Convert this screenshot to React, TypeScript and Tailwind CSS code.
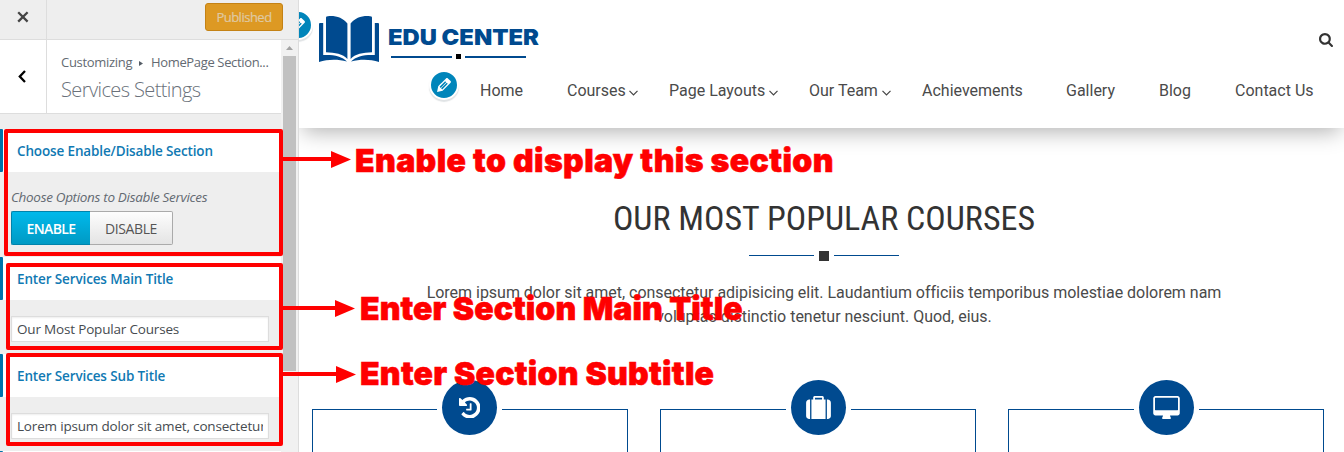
import type { ReactNode } from 'react';

const navItems = [
  { label: 'Home', width: 'w-[87px]', text: '', menu: false },
  { label: 'Courses', width: 'w-[102px]', text: 'w-[58px]', menu: true },
  { label: 'Page Layouts', width: 'w-[140px]', text: 'w-[96px]', menu: true },
  { label: 'Our Team', width: 'w-[113px]', text: 'w-[69px]', menu: true },
  { label: 'Achievements', width: 'w-[144px]', text: '', menu: false },
  { label: 'Gallery', width: 'w-[93px]', text: '', menu: false },
  { label: 'Blog', width: 'w-[76px]', text: '', menu: false },
  { label: 'Contact Us', width: 'w-[109px]', text: '', menu: false },
];

function EditBadge() {
  return (
    <span className="flex size-[30px] items-center justify-center rounded-full border-2 border-white bg-[#0085ba] shadow-[0_2px_1px_rgba(46,68,83,0.15)]">
      <svg viewBox="0 0 20 20" className="size-5 shrink-0 fill-white">
        <path d="M13.89 3.39l2.71 2.72c.46.46.42 1.24.03 1.64l-8.01 8.02-5.56 1.16 1.16-5.58s7.6-7.63 7.99-8.03c.39-.39 1.22-.39 1.68.07zm-2.73 2.79l-5.59 5.61 1.11 1.11 5.54-5.65zm-2.97 8.23l5.58-5.6-1.07-1.08-5.59 5.6z" />
      </svg>
    </span>
  );
}

function SectionHeading({ children, className }: { children?: ReactNode; className: string }) {
  return (
    <div className="flex h-[43px] shrink-0 items-center bg-white">
      <span className="h-full w-[3px] rounded-r-[1px] bg-[#0073aa]" />
      <h3 className={`pt-[2px] pl-[14px] text-[13.5px] font-semibold whitespace-nowrap text-[#1079b3] ${className}`}>{children}</h3>
    </div>
  );
}

function TextField({ value, className }: { value: string; className: string }) {
  return (
    <div className="ml-[11px] flex h-[26px] w-[258px] items-center border border-[#ddd] bg-white px-[5px] shadow-[inset_0_1px_2px_rgba(0,0,0,0.07)]">
      <span className={`w-full overflow-hidden pt-px text-[13.5px] whitespace-nowrap text-[#464b50] ${className}`}>{value}</span>
    </div>
  );
}

function Sidebar() {
  return (
    <aside className="flex h-[452px] w-[299px] shrink-0 flex-col border-r border-[#ddd] bg-[#eee] font-['Open_Sans',sans-serif]">
      <div className="flex h-10 shrink-0 border-b border-[#ddd]">
        <div className="flex w-[47px] items-center justify-center border-r border-[#ddd] pb-[5px]">
          <svg viewBox="0 0 12 12" className="size-3 fill-none stroke-[#444]" strokeWidth="2.3">
            <path d="M1.2 1.2l9.4 9.4M10.6 1.2L1.2 10.6" />
          </svg>
        </div>
        <div className="flex flex-1 justify-end pt-[3px] pr-[15px]">
          <span className="flex h-7 w-[78px] items-center justify-center rounded-[3px] border border-[#c48215] bg-[#dd9923] pt-px text-[13px] tracking-[-0.5px] text-[#dfc9a2] [-webkit-text-stroke:0.2px_#dfc9a2]">
            Published
          </span>
        </div>
      </div>
      <div className="flex min-h-0 flex-1">
        <div className="flex w-[281px] flex-col overflow-hidden">
          <div className="flex h-[74px] shrink-0 border-b border-[#ddd] bg-white">
            <div className="flex w-[47px] items-center justify-center border-r border-[#ddd] pr-[2px]">
              <svg viewBox="0 0 8 13" className="h-[13px] w-2 fill-none stroke-black" strokeWidth="2.3">
                <path d="M7 1L1.8 6.5L7 12" />
              </svg>
            </div>
            <div className="pt-[13px] pl-[14px]">
              <div className="flex h-5 items-center text-[13px] whitespace-nowrap text-[#636a72]">
                <span className="w-[78px] tracking-[-0.3px]">Customizing</span>
                <svg viewBox="0 0 4 5" className="mr-2 h-[5px] w-1 fill-[#555d66]">
                  <path d="M0 0l4 2.5L0 5z" />
                </svg>
                <span className="tracking-[-0.35px]">HomePage Section...</span>
              </div>
              <div className="mt-[3px] text-[20px] leading-[28px] font-light tracking-[-0.6px] text-[#6a717a]">Services Settings</div>
            </div>
          </div>
          <div className="flex flex-col pt-[15px]">
            <SectionHeading className="tracking-[-0.14px]">Choose Enable/Disable Section</SectionHeading>
            <div className="h-[85px] pt-4 pl-[11px]">
              <p className="h-[23px] text-[13.5px] leading-[18px] tracking-[-0.32px] whitespace-nowrap text-[#636a72] italic">
                Choose Options to Disable Services
              </p>
              <div className="flex h-[34px] w-[162px] text-[14px]">
                <span className="flex w-[79px] items-center justify-center rounded-l-[2px] border border-r-0 border-[#0083ab] bg-linear-to-b from-[#00b9eb] to-[#009ac4] font-semibold tracking-[-0.6px] text-white">
                  ENABLE
                </span>
                <span className="flex w-[83px] items-center justify-center rounded-r-[2px] border border-l-0 border-[#aaa] bg-linear-to-b from-[#fdfdfd] to-[#e4e4e4] tracking-[-0.4px] text-[#555]">
                  DISABLE
                </span>
              </div>
            </div>
            <SectionHeading className="tracking-[-0.13px]">Enter Services Main Title</SectionHeading>
            <div className="h-[54px] pt-4">
              <TextField value="Our Most Popular Courses" className="tracking-[-0.18px]" />
            </div>
            <SectionHeading className="tracking-[-0.13px]">Enter Services Sub Title</SectionHeading>
            <div className="h-[54px] pt-4">
              <TextField value="Lorem ipsum dolor sit amet, consectetur" className="tracking-[-0.18px]" />
            </div>
            <SectionHeading className="" />
          </div>
        </div>
        <div className="flex w-[17px] flex-col items-center bg-[#f1f1f1]">
          <div className="flex h-4 items-center justify-center">
            <svg viewBox="0 0 7 4" className="h-1 w-[7px] fill-[#a3a3a3]">
              <path d="M3.5 0L7 4H0z" />
            </svg>
          </div>
          <div className="h-[315px] w-[13px] bg-[#c1c1c1]" />
        </div>
      </div>
    </aside>
  );
}

function Logo() {
  return (
    <div className="flex">
      <svg viewBox="0 0 60 46" className="h-[46px] w-[60px] fill-[#004a8f]">
        <path d="M7 1.500Q7 0.300 9 0.200C17-0.500 24 2 28.400 7.500V43C24 38 16 36.500 7 36.300Z" />
        <path d="M53 1.500Q53 0.300 51 0.200C43-0.500 36 2 31.600 7.500V43C36 38 44 36.500 53 36.300Z" />
        <path d="M0 8Q0 7 1 7H4.200V39C14 38.500 23 40 28 45.500C19 43 9 43 0 46Z" />
        <path d="M60 8Q60 7 59 7H55.800V39C46 38.500 37 40 32 45.500C41 43 51 43 60 46Z" />
      </svg>
      <div className="pt-[9px] pl-[9px]">
        <div className="h-[29px] w-[137px] origin-left scale-x-[1.105] font-['Inter',sans-serif] text-[21.5px] leading-[25px] font-black whitespace-nowrap text-[#004a8f]">
          EDU CENTER
        </div>
        <div className="flex items-center pl-[3px]">
          <span className="h-[2px] w-[61px] bg-[#004a8f]" />
          <span className="mx-1 size-[5px] bg-black" />
          <span className="h-[2px] w-[61px] bg-[#004a8f]" />
        </div>
      </div>
    </div>
  );
}

function SiteHeader() {
  return (
    <header className="relative h-32 shrink-0 bg-white shadow-[0_8px_20px_-4px_rgba(0,0,0,0.3)]">
      <div className="flex h-[70px] justify-between pt-4 pr-[11px] pl-5">
        <Logo />
        <svg viewBox="0 128 1664 1664" className="mt-[17px] size-[14px] fill-[#333]">
          <path d="M1152 832q0-185-131.5-316.5t-316.5-131.5-316.5 131.5-131.5 316.5 131.5 316.5 316.5 131.5 316.5-131.5 131.5-316.5zm512 832q0 52-38 90t-90 38q-54 0-90-38l-343-342q-179 124-399 124-143 0-273.500-55.500t-225-150-150-225-55.500-273.500 55.500-273.500 150-225 225-150 273.500-55.500 273.500 55.500 225 150 150 225 55.500 273.500q0 220-124 399l343 343q37 37 37 90z" />
        </svg>
      </div>
      <div className="flex items-start pl-[130px]">
        <EditBadge />
        <nav className="flex h-[42px] items-center pl-[21px] text-[16px] font-normal tracking-[0px] whitespace-nowrap text-[#4a4a4a]">
          {navItems.map((item) => (
            <a key={item.label} className={`flex shrink-0 items-center ${item.width}`}>
              <span className={item.text}>{item.label}</span>
              {item.menu && (
                <svg viewBox="0 0 9 6" className="mt-[3px] ml-1 h-[6px] w-[9px] fill-none stroke-[#444]" strokeWidth="1.200">
                  <path d="M0.500 0.800L4.500 4.900L8.500 0.800" />
                </svg>
              )}
            </a>
          ))}
        </nav>
      </div>
      <div className="absolute top-[10px] left-0 w-[14px] overflow-hidden pb-1">
        <div className="-ml-4">
          <EditBadge />
        </div>
      </div>
    </header>
  );
}

const cards = [
  {
    name: 'history',
    left: 'w-[125px]',
    viewBox: '0 128 1536 1536',
    size: 'h-[21.500px] w-[21.500px]',
    path: 'M1536 896q0 156-61 298t-164 245-245 164-298 61q-172 0-327-72.500t-264-204.500q-7-10-6.500-22.500t8.500-20.500l137-138q10-9 25-9 16 2 23 12 73 95 179 147t225 52q104 0 198.500-40.500t163.500-109.500 109.500-163.500 40.500-198.500-40.500-198.500-109.500-163.500-163.500-109.500-198.500-40.500q-98 0-188 35.500t-160 101.500l137 138q31 30 14 69-17 40-59 40h-448q-26 0-45-19t-19-45v-448q0-42 40-59 39-17 69 14l130 129q107-101 244.500-156.500t284.500-55.500q156 0 298 61t245 164 164 245 61 298zm-640-288v448q0 14-9 23t-23 9h-320q-14 0-23-9t-9-23v-64q0-14 9-23t23-9h224v-352q0-14 9-23t23-9h64q14 0 23 9t9 23z',
  },
  {
    name: 'suitcase',
    left: 'w-[126px]',
    viewBox: '0 0 1792 1664',
    size: 'h-[23px] w-[25px]',
    path: 'M640 256h512v-128h-512v128zm-352 0v1408h-64q-92 0-158-66t-66-158v-960q0-92 66-158t158-66h64zm1120 0v1408h-1024v-1408h128v-160q0-40 28-68t68-28h576q40 0 68 28t28 68v160h128zm384 224v960q0 92-66 158t-158 66h-64v-1408h64q92 0 158 66t66 158z',
  },
  {
    name: 'desktop',
    left: 'w-[126px]',
    viewBox: '0 0 1920 1664',
    size: 'mb-px h-[23px] w-[27px]',
    path: 'M1792 992v-832q0-13-9.500-22.500t-22.500-9.500h-1600q-13 0-22.500 9.500t-9.500 22.500v832q0 13 9.500 22.500t22.500 9.500h1600q13 0 22.500-9.500t9.500-22.500zm128-832v1088q0 66-47 113t-113 47h-544q0 37 16 77.500t32 71 16 43.500q0 26-19 45t-45 19h-512q-26 0-45-19t-19-45q0-14 16-44t32-70 16-78h-544q-66 0-113-47t-47-113v-1088q0-66 47-113t113-47h1600q66 0 113 47t47 113z',
  },
];

function Site() {
  return (
    <main className="flex h-[452px] min-w-0 flex-1 flex-col overflow-hidden bg-white font-['Roboto',sans-serif]">
      <SiteHeader />
      <section className="flex flex-col items-center pt-[68px] pl-[5px] text-[#333]">
        <h2 className="h-[45px] font-['Roboto_Condensed','Roboto',sans-serif] text-[34px] leading-[45px] font-normal whitespace-nowrap [font-stretch:75%]">
          OUR MOST POPULAR COURSES
        </h2>
        <div className="mt-[10px] flex h-[10px] items-center">
          <span className="mb-px h-px w-[65px] bg-[#004a8f]" />
          <span className="mx-[5px] size-[10px] bg-[#333]" />
          <span className="mb-px h-px w-[65px] bg-[#004a8f]" />
        </div>
        <p className="mt-5 text-center text-[16px] leading-6 font-normal tracking-[-0.02px] whitespace-nowrap text-[#4a4a4a]">
          Lorem ipsum dolor sit amet, consectetur adipisicing elit. Laudantium officiis temporibus molestiae dolorem nam
          <br />
          voluptas distinctio tenetur nesciunt. Quod, eius.
        </p>
      </section>
      <section className="mt-[51px] flex gap-8 pl-[13px]">
        {cards.map((card) => (
          <article key={card.name} className="flex h-[120px] w-[316px] shrink-0">
            <div className={`mt-[29px] border-t border-l border-[#004a8f] ${card.left}`} />
            <div className="mx-[5px] flex size-[55px] items-center justify-center rounded-full bg-[#004a8f]">
              <svg viewBox={card.viewBox} className={`fill-white ${card.size}`}>
                <path d={card.path} />
              </svg>
            </div>
            <div className="mt-[29px] flex-1 border-t border-r border-[#004a8f]" />
          </article>
        ))}
      </section>
    </main>
  );
}

function Callout({ box, line, children }: { box: string; line: string; children: ReactNode }) {
  return (
    <div className={`absolute flex ${box}`}>
      <div className={`flex items-center ${line}`}>
        <span className="h-1 flex-1 bg-[#f00]" />
        <svg viewBox="0 0 20 17" className="h-[17px] w-5 fill-[#f00]">
          <path d="M0 0L20 8.500L0 17z" />
        </svg>
      </div>
      {children}
    </div>
  );
}

const calloutText =
  "font-['Inter',sans-serif] text-[32px] leading-[40px] font-black whitespace-nowrap text-[#f00] [-webkit-text-stroke:0.6px_#f00]";

export default function App() {
  return (
    <div className="relative flex h-[452px] w-[1344px] overflow-hidden bg-white">
      <Sidebar />
      <Site />
      <div className="absolute top-[129px] left-1 h-[127px] w-[279px] rounded-[2px] border-4 border-[#f00]" />
      <div className="absolute top-[263px] left-[6px] h-[87px] w-[277px] rounded-[2px] border-4 border-[#f00]" />
      <div className="absolute top-[353px] left-[6px] h-[93px] w-[277px] rounded-[2px] border-4 border-[#f00]" />
      <Callout box="top-[139px] left-[283px] h-10" line="w-[68px]">
        <span className={`pt-[2px] pl-1 tracking-[0.38px] ${calloutText}`}>Enable to display this section</span>
      </Callout>
      <Callout box="top-[288px] left-[283px] h-10" line="w-[72px]">
        <span className={`pt-px pl-[5px] tracking-[0.05px] ${calloutText}`}>Enter Section Main Title</span>
      </Callout>
      <Callout box="top-[354px] left-[283px] h-10" line="w-[73px]">
        <span className={`pl-1 tracking-[0.25px] ${calloutText}`}>Enter Section Subtitle</span>
      </Callout>
    </div>
  );
}
